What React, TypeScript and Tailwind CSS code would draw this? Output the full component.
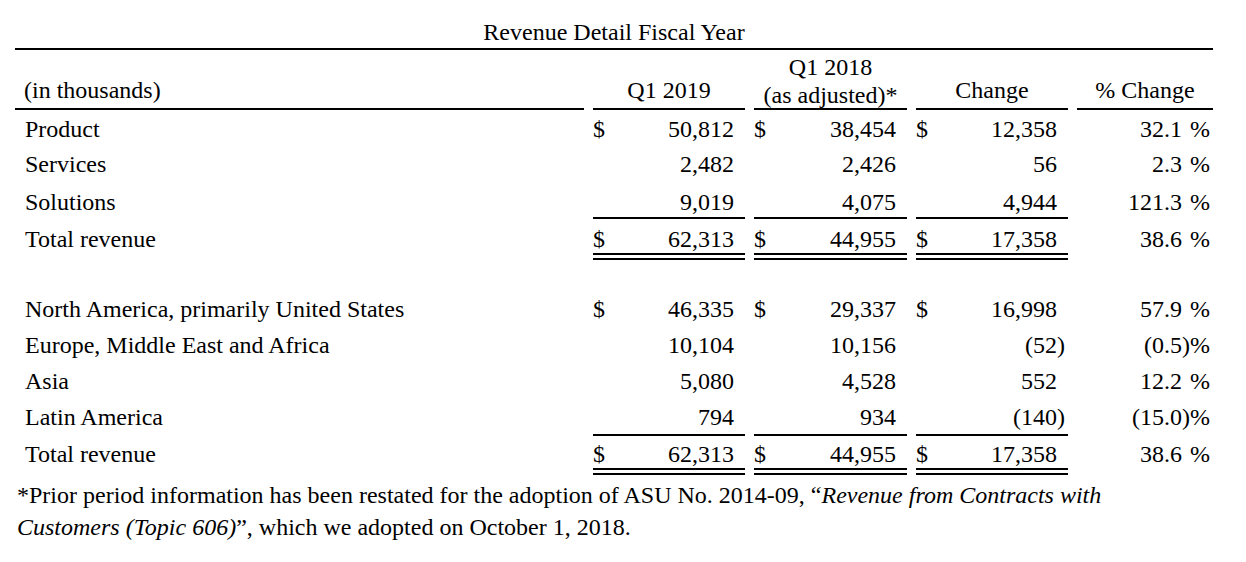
import React from 'react';

type Row = {
  label: string;
  q1: string;
  q2: string;
  chg: string;
  pct: string;
  dollar?: boolean;
  h: string;
};

const productRows: Row[] = [
  { label: 'Product', q1: '50,812', q2: '38,454', chg: '12,358', pct: '32.1', dollar: true, h: 'h-[33px]' },
  { label: 'Services', q1: '2,482', q2: '2,426', chg: '56', pct: '2.3', h: 'h-[35px]' },
  { label: 'Solutions', q1: '9,019', q2: '4,075', chg: '4,944', pct: '121.3', h: 'h-[39px] pb-[1px]' },
];

const regionRows: Row[] = [
  { label: 'North America, primarily United States', q1: '46,335', q2: '29,337', chg: '16,998', pct: '57.9', dollar: true, h: 'h-[63px]' },
  { label: 'Europe, Middle East and Africa', q1: '10,104', q2: '10,156', chg: '(52)', pct: '(0.5)', h: 'h-[36px]' },
  { label: 'Asia', q1: '5,080', q2: '4,528', chg: '552', pct: '12.2', h: 'h-[36px]' },
  { label: 'Latin America', q1: '794', q2: '934', chg: '(140)', pct: '(15.0)', h: 'h-[39px] pb-[3px]' },
];

const grid = 'grid grid-cols-[569px_152px_153px_152px_136px] gap-x-[9px]';

function Num({ value }: { value: string }) {
  const neg = value.startsWith('(');
  return (
    <span>
      {value}
      {!neg && <span className="invisible">)</span>}
    </span>
  );
}

function Money({ value, dollar }: { value: string; dollar?: boolean }) {
  return (
    <div className="flex justify-between pr-[3px] leading-[28px]">
      <span>{dollar ? '$' : ''}</span>
      <Num value={value} />
    </div>
  );
}

function Pct({ value }: { value: string }) {
  return (
    <div className="flex justify-end pr-[3px] leading-[28px]">
      <Num value={value} />
      <span>%</span>
    </div>
  );
}

function DataRow({ row }: { row: Row }) {
  return (
    <div className={`${grid} items-end ${row.h}`}>
      <div className="pl-[10px] leading-[28px]">{row.label}</div>
      <Money value={row.q1} dollar={row.dollar} />
      <Money value={row.q2} dollar={row.dollar} />
      <Money value={row.chg} dollar={row.dollar} />
      <Pct value={row.pct} />
    </div>
  );
}

function TotalRow({ h }: { h: string }) {
  return (
    <DataRow
      row={{ label: 'Total revenue', q1: '62,313', q2: '44,955', chg: '17,358', pct: '38.6', dollar: true, h }}
    />
  );
}

function SingleRule() {
  return (
    <div className={grid}>
      <div />
      <div className="h-[2px] bg-black" />
      <div className="h-[2px] bg-black" />
      <div className="h-[2px] bg-black" />
      <div />
    </div>
  );
}

function DoubleRule() {
  const line = (
    <div className="flex flex-col gap-[3px]">
      <div className="h-[2px] bg-black" />
      <div className="h-[2px] bg-black" />
    </div>
  );
  return (
    <div className={grid}>
      <div />
      {line}
      {line}
      {line}
      <div />
    </div>
  );
}

export default function App() {
  return (
    <div className="w-[1246px] h-[562px] bg-white text-black text-[24px] font-['Liberation_Serif',serif] overflow-hidden">
      <div className="ml-[15px] w-[1198px]">
        <div className="h-[48px] pt-[18px] text-center leading-[28px]">Revenue Detail Fiscal Year</div>
        <div className="h-[2px] bg-black" />

        <div className={`${grid} h-[58px]`}>
          <div className="pl-[9px] pt-[26px] leading-[28px]">(in thousands)</div>
          <div className="pt-[26px] leading-[28px] text-center">Q1 2019</div>
          <div className="pt-[3px] leading-[28px] text-center">
            <div>Q1 2018</div>
            <div>(as adjusted)*</div>
          </div>
          <div className="pt-[26px] leading-[28px] text-center">Change</div>
          <div className="pt-[26px] leading-[28px] text-center">% Change</div>
        </div>
        <div className={grid}>
          <div className="h-[2px] bg-black" />
          <div className="h-[2px] bg-black" />
          <div className="h-[2px] bg-black" />
          <div className="h-[2px] bg-black" />
          <div className="h-[2px] bg-black" />
        </div>

        {productRows.map((r) => (
          <DataRow key={r.label} row={r} />
        ))}
        <SingleRule />
        <TotalRow h="h-[34px]" />
        <DoubleRule />

        {regionRows.map((r) => (
          <DataRow key={r.label} row={r} />
        ))}
        <SingleRule />
        <TotalRow h="h-[32px]" />
        <DoubleRule />

        <p className="mt-[4px] pl-[2px] leading-[32px]">
          *Prior period information has been restated for the adoption of ASU No. 2014-09, “
          <em>Revenue from Contracts with</em>
          <br />
          <em>Customers (Topic 606)</em>”, which we adopted on October 1, 2018.
        </p>
      </div>
    </div>
  );
}
